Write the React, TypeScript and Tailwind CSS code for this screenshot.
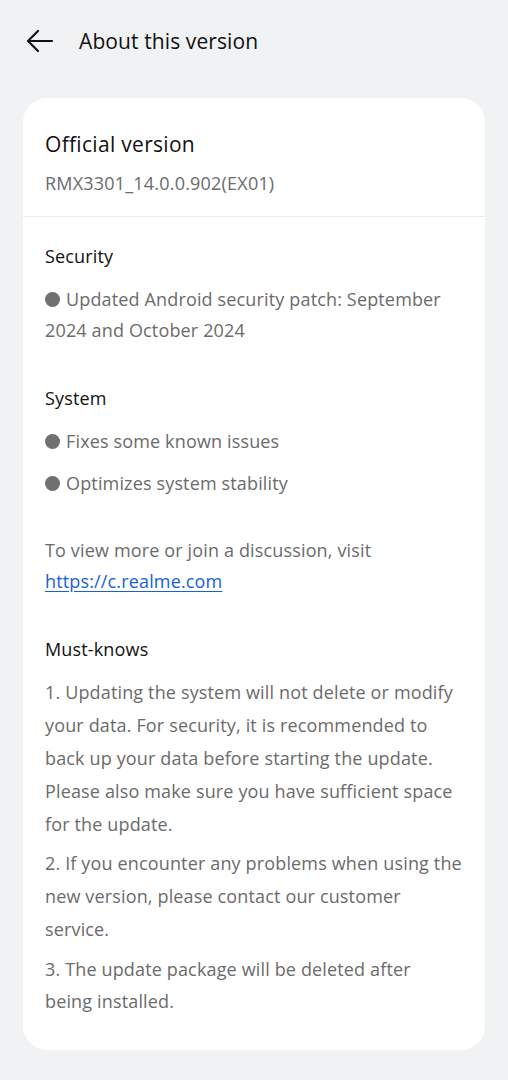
export default function App() {
  const dot = <span className="mr-[6px] inline-block h-[15px] w-[15px] rounded-full bg-[#707070] align-[-1px]" />;

  return (
    <div className="min-h-[1080px] w-full bg-[#f1f2f4] font-['Open_Sans',sans-serif]">
      {/* header */}
      <div className="flex h-[82px] items-center px-[26px]">
        <svg width="28" height="24" viewBox="0 0 28 24" fill="none" stroke="#111" strokeWidth="2.2" strokeLinecap="round" strokeLinejoin="round">
          <path d="M2 12h24M12 2L2 12l10 10" />
        </svg>
        <h1 className="ml-[25px] text-[21px] leading-[28px] tracking-[0.1px] text-[#111]">About this version</h1>
      </div>

      <div className="mx-[23px] mt-[16px] rounded-[24px] bg-white pb-[33px]">
        <div className="px-[22px] pt-[32px] pb-[20px]">
          <div className="text-[21px] leading-[28px] tracking-[0.3px] text-[#111]">Official version</div>
          <div className="mt-[12px] text-[18px] leading-[26px] tracking-[0.2px] text-[#6b6b6b]">RMX3301_14.0.0.902(EX01)</div>
        </div>
        <div className="h-px bg-[#ececec]" />

        <div className="pl-[22px] pr-[16px] pt-[26px] text-[18px] tracking-[0.15px] text-[#6b6b6b]">
          <div className="leading-[26px] text-[#111]">Security</div>
          <p className="mt-[15px] leading-[31px]">
            {dot}Updated Android security patch: September
            <br />
            2024 and October 2024
          </p>

          <div className="mt-[39px] leading-[26px] text-[#111]">System</div>
          <p className="mt-[14px] leading-[32px]">{dot}Fixes some known issues</p>
          <p className="mt-[10px] leading-[32px]">{dot}Optimizes system stability</p>

          <p className="mt-[36px] leading-[31px]">
            To view more or join a discussion, visit
            <br />
            <a href="#" className="text-[#1a5fd9] underline underline-offset-[3px]">https://c.realme.com</a>
          </p>

          <div className="mt-[39px] leading-[26px] text-[#111]">Must-knows</div>
          <p className="mt-[14px] leading-[33px]">
            1. Updating the system will not delete or modify
            <br />
            your data. For security, it is recommended to
            <br />
            back up your data before starting the update.
            <br />
            Please also make sure you have sufficient space
            <br />
            for the update.
          </p>
          <p className="mt-[6px] leading-[33px]">
            2. If you encounter any problems when using the
            <br />
            new version, please contact our customer
            <br />
            service.
          </p>
          <p className="mt-[7px] leading-[32px]">
            3. The update package will be deleted after
            <br />
            being installed.
          </p>
        </div>
      </div>
    </div>
  );
}
